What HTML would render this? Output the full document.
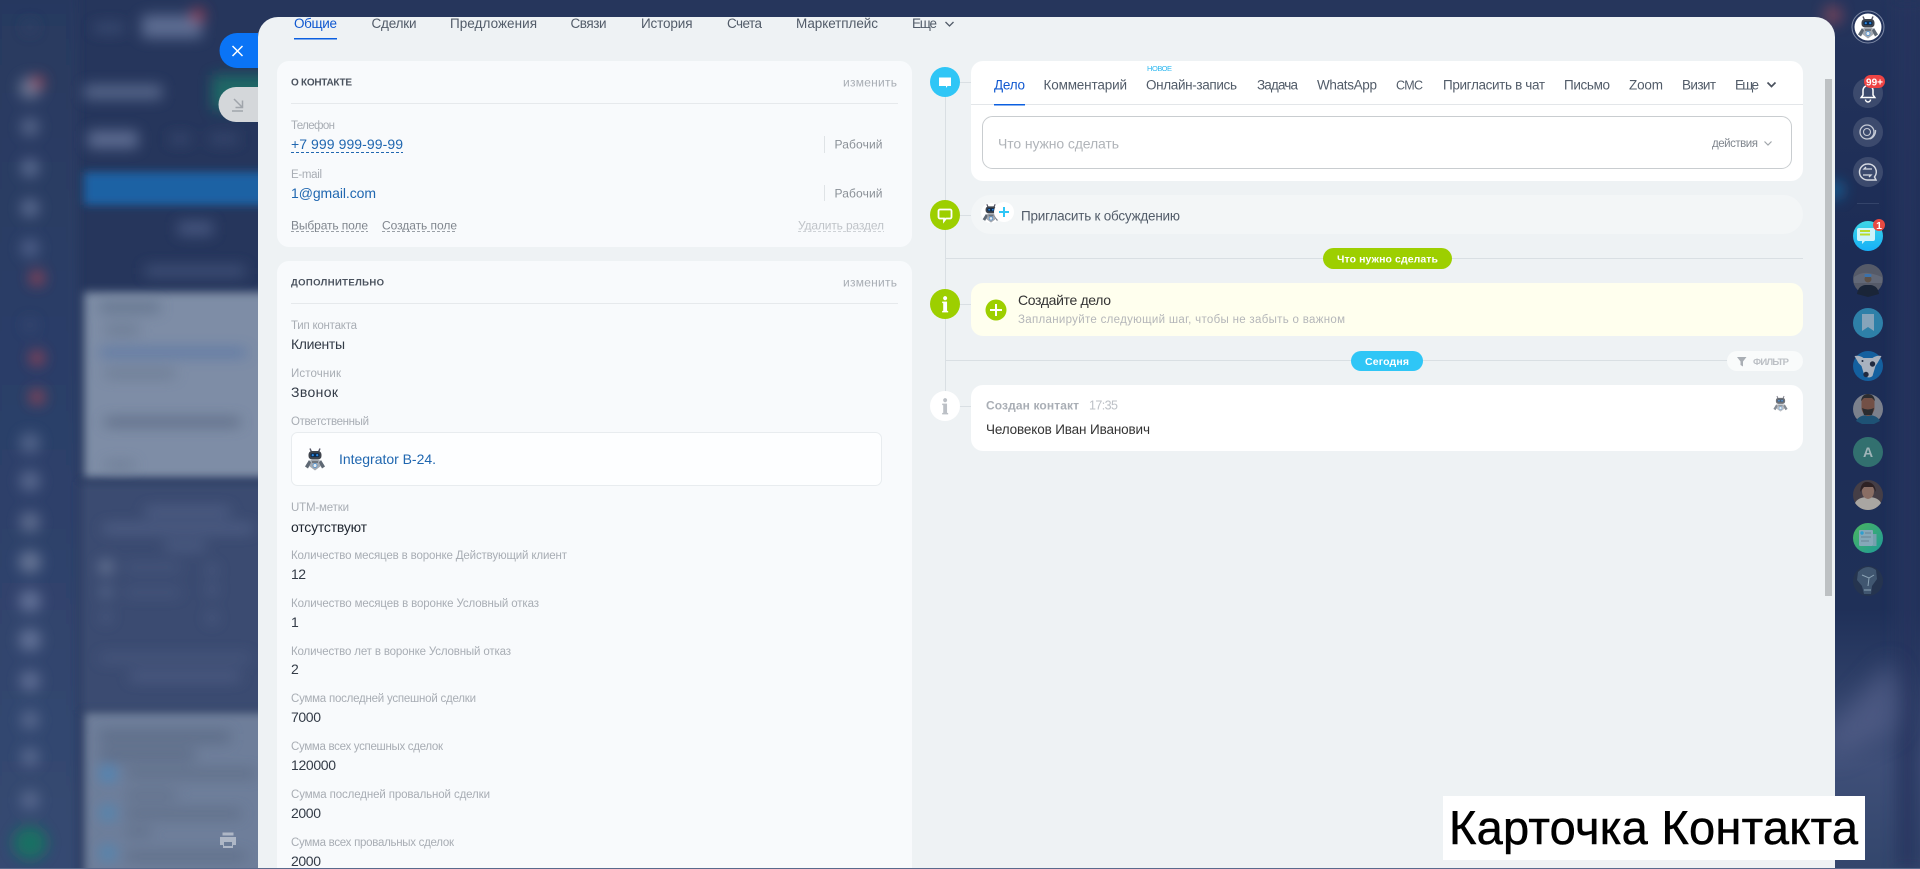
<!DOCTYPE html>
<html lang="ru">
<head>
<meta charset="utf-8">
<title>Карточка Контакта</title>
<style>
html,body{margin:0;padding:0;width:1920px;height:869px;overflow:hidden;background:#26365c}
svg{display:block}
text{font-family:"Liberation Sans","DejaVu Sans",sans-serif;white-space:pre}
.tab{font-size:13.5px;fill:#525c69}
.lbl{font-size:11.5px;fill:#a8adb4}
.val{font-size:14px;fill:#333b47}
.blu{font-size:14px;fill:#2067b0}
.head{font-size:10px;font-weight:bold;fill:#4a525e}
.chg{font-size:12px;fill:#a8adb4}
.wrk{font-size:12px;fill:#8a9097}
.pill{font-size:10.5px;font-weight:bold;fill:#fff}
</style>
</head>
<body>
<svg xmlns="http://www.w3.org/2000/svg" width="1920" height="869" viewBox="0 0 1920 869">
<defs>
<filter id="b6" x="-60%" y="-60%" width="220%" height="220%"><feGaussianBlur stdDeviation="7"/></filter>
<filter id="b3" x="-50%" y="-50%" width="200%" height="200%"><feGaussianBlur stdDeviation="4.5"/></filter>
<filter id="b12" x="-50%" y="-50%" width="200%" height="200%"><feGaussianBlur stdDeviation="12"/></filter>
<linearGradient id="leftbar" x1="0" y1="0" x2="0" y2="1"><stop offset="0" stop-color="#28395f"/><stop offset=".5" stop-color="#2c3f69"/><stop offset="1" stop-color="#364a72"/></linearGradient>
<linearGradient id="rightbar" x1="0" y1="0" x2="0" y2="1"><stop offset="0" stop-color="#24345c"/><stop offset=".3" stop-color="#1c2c55"/><stop offset=".7" stop-color="#1f3058"/><stop offset=".88" stop-color="#3f4f78"/><stop offset="1" stop-color="#33466c"/></linearGradient>
<symbol id="robot" viewBox="0 0 24 24">
<path d="M7 1.500l1.500 3.500M17 1.500l-1.500 3.500" stroke="#556" stroke-width="1.400" fill="none"/>
<rect x="5.500" y="4" width="13" height="8.500" rx="3.500" fill="#3f444c"/>
<rect x="7.500" y="6.200" width="9" height="3.800" rx="1.800" fill="#0d2a4c"/>
<circle cx="9.800" cy="8.100" r="1.100" fill="#2a86e0"/><circle cx="14.200" cy="8.100" r="1.100" fill="#2a86e0"/>
<path d="M7.500 13h9l1.500 6-6 4.500-6-4.500z" fill="#a3a9b1"/>
<path d="M6 13L2 19.500l3 2L8 15.500M18 13l4 6.500-3 2L16 15.500" fill="#5e6874"/>
<path d="M9 14h6v2H9z" fill="#70767e"/>
<circle cx="12" cy="18.500" r="2" fill="#e3e9ee" stroke="#4c8fd0" stroke-width=".8"/>
</symbol>
</defs>

<!-- blurred background -->
<rect width="1920" height="869" fill="#26365c"/>
<rect x="-10" y="-10" width="88" height="890" fill="url(#leftbar)" filter="url(#b3)"/>
<g filter="url(#b6)" opacity=".88">
<rect x="142" y="15" width="60" height="23" fill="#65749a"/>
<circle cx="198" cy="15" r="7" fill="#a84050"/>
<rect x="94" y="24" width="30" height="8" fill="#43527a"/>
<circle cx="30" cy="27" r="6" fill="#35456b"/>
<circle cx="30" cy="88" r="11" fill="#727e9a"/>
<circle cx="38" cy="82" r="6" fill="#b84852"/>
<circle cx="30" cy="127" r="9" fill="#5f6e92"/>
<circle cx="30" cy="168" r="9" fill="#65749a"/>
<circle cx="30" cy="208" r="9" fill="#65749a"/>
<circle cx="30" cy="248" r="9" fill="#566690"/>
<circle cx="37" cy="278" r="7" fill="#b44450"/>
<circle cx="30" cy="325" r="6" fill="#3e4e74"/>
<circle cx="37" cy="358" r="7" fill="#b44450"/>
<circle cx="37" cy="397" r="7" fill="#b44450"/>
<rect x="84" y="85" width="78" height="14" fill="#5e6e92"/>
<rect x="212" y="75" width="60" height="35" fill="#1a7068"/>
<rect x="88" y="131" width="50" height="17" fill="#66759a"/>
<rect x="170" y="135" width="20" height="8" fill="#3f4f76"/>
<rect x="210" y="135" width="28" height="8" fill="#3f4f76"/>
<rect x="178" y="222" width="35" height="13" fill="#4e5d86"/>
<rect x="145" y="266" width="100" height="10" fill="#47567e"/>
</g>
<rect x="84" y="172" width="190" height="33" fill="#1a62a4" filter="url(#b3)"/>
<rect x="84" y="292" width="190" height="186" fill="#7e8da6" filter="url(#b3)"/>
<rect x="80" y="482" width="190" height="228" fill="#3b4c71" filter="url(#b3)"/>
<rect x="84" y="712" width="190" height="170" fill="#6e7e9a" filter="url(#b3)"/>
<g filter="url(#b6)" opacity=".9">
<rect x="100" y="303" width="60" height="9" fill="#5f6f88"/>
<rect x="105" y="326" width="34" height="8" fill="#66768e"/>
<rect x="100" y="349" width="146" height="7" fill="#5070a4"/>
<rect x="105" y="370" width="70" height="7" fill="#66768e"/>
<rect x="105" y="418" width="135" height="8" fill="#56657f"/>
<rect x="105" y="462" width="30" height="6" fill="#66768e"/>
<rect x="145" y="508" width="85" height="7" fill="#5a6990"/>
<rect x="103" y="525" width="150" height="7" fill="#5a6990"/>
<rect x="165" y="543" width="40" height="6" fill="#5a6990"/>
<circle cx="106" cy="567" r="7" fill="#73819f"/>
<circle cx="106" cy="592" r="6" fill="#5f6f92"/>
<circle cx="106" cy="617" r="5" fill="#536388"/>
<rect x="125" y="565" width="55" height="5" fill="#4f5f84"/>
<rect x="125" y="590" width="55" height="5" fill="#4f5f84"/>
<circle cx="212" cy="570" r="5" fill="#536388"/>
<circle cx="212" cy="590" r="5" fill="#536388"/>
<circle cx="212" cy="618" r="5" fill="#536388"/>
<rect x="100" y="655" width="150" height="6" fill="#4f5f84"/>
<rect x="130" y="673" width="110" height="7" fill="#54648a"/>
<rect x="100" y="732" width="130" height="10" fill="#596882"/>
<rect x="100" y="750" width="95" height="10" fill="#596882"/>
<circle cx="108" cy="774" r="8" fill="#4488c0"/>
<circle cx="108" cy="813" r="8" fill="#4c88b8"/>
<circle cx="108" cy="853" r="8" fill="#4c88b8"/>
<rect x="126" y="770" width="130" height="7" fill="#586780"/>
<rect x="126" y="792" width="50" height="6" fill="#586780"/>
<rect x="126" y="810" width="115" height="7" fill="#586780"/>
<rect x="126" y="829" width="25" height="6" fill="#586780"/>
<rect x="126" y="853" width="120" height="7" fill="#586780"/>
<circle cx="30" cy="443" r="10" fill="#5a6a90"/>
<circle cx="30" cy="481" r="10" fill="#606f94"/>
<circle cx="30" cy="522" r="10" fill="#667594"/>
<circle cx="30" cy="562" r="11" fill="#6f7e9c"/>
<circle cx="30" cy="601" r="11" fill="#6a799e"/>
<circle cx="30" cy="640" r="11" fill="#6a799e"/>
<circle cx="30" cy="681" r="10" fill="#66759a"/>
<circle cx="30" cy="720" r="9" fill="#606f94"/>
<circle cx="30" cy="757" r="9" fill="#606f94"/>
<circle cx="30" cy="800" r="9" fill="#606f94"/>
<circle cx="30" cy="843" r="17" fill="#157562"/>
</g>

<!-- right bar -->
<rect x="1835" y="0" width="85" height="869" fill="url(#rightbar)"/>
<rect x="1895" y="0" width="25" height="869" fill="#25365f" opacity=".75" filter="url(#b6)"/>
<path d="M1828 730L1892 660L1900 700L1896 730L1830 760Z" fill="#55618a" opacity=".7" filter="url(#b12)"/>
<circle cx="1833" cy="15" r="10" fill="#a04b5a" opacity=".6" filter="url(#b6)"/>
<circle cx="1835" cy="190" r="10" fill="#1876b0" opacity=".6" filter="url(#b6)"/>

<!-- side handles -->
<path d="M258 33h-21a17.500 17.500 0 0 0 0 35h21z" fill="#0a74f6"/>
<path d="M232.500 46l10 10M242.500 46l-10 10" stroke="#fff" stroke-width="1.500" fill="none"/>
<path d="M258 87h-22a17.500 17.500 0 0 0 0 35h22z" fill="#d4d7da"/>
<path d="M234 99l8 8M242.500 100.500v7h-7M232 111h11" stroke="#a0a5ab" stroke-width="1.500" fill="none"/>
<path d="M222.500 832.500h11v3h-11zM220 837h16v8h-3v3h-10v-3h-3z" fill="#aeb7c6"/>
<rect x="224" y="842" width="8" height="4" fill="#6c7d98"/>

<!-- slider panel -->
<path d="M278 17H1815a20 20 0 0 1 20 20V868H258V37a20 20 0 0 1 20-20z" fill="#eef2f4"/>
<rect x="1825" y="79" width="7" height="517" fill="#bdc1c3"/>
<rect x="0" y="868" width="1920" height="1" fill="#5a6a8c"/>

<!-- top tabs -->
<g class="tabs">
<text class="tab" style="fill:#1058d0" x="294" y="28" textLength="43">Общие</text>
<rect x="294" y="38" width="43" height="1.500" fill="#0b5fe0"/>
<text class="tab" x="371.500" y="28" textLength="45">Сделки</text>
<text class="tab" x="450" y="28" textLength="87">Предложения</text>
<text class="tab" x="570.500" y="28" textLength="36">Связи</text>
<text class="tab" x="641" y="28" textLength="51.500">История</text>
<text class="tab" x="727" y="28" textLength="35">Счета</text>
<text class="tab" x="796" y="28" textLength="82">Маркетплейс</text>
<text class="tab" x="912" y="28" textLength="25">Еще</text>
<path d="M945.500 22l4 4 4-4" stroke="#525c69" stroke-width="1.300" fill="none"/>
</g>

<!-- left column cards -->
<rect x="277" y="61" width="635" height="186" rx="12" fill="#f8fafc"/>
<rect x="277" y="261" width="635" height="620" rx="12" fill="#f8fafc"/>
<text class="head" x="291" y="85.500" textLength="61">О КОНТАКТЕ</text>
<text class="chg" x="843" y="86.500" textLength="54">изменить</text>
<rect x="291" y="103" width="607" height="1" fill="#e6e9ec"/>

<text class="lbl" x="291" y="129" textLength="44">Телефон</text>
<text class="blu" x="291" y="149" textLength="112">+7 999 999-99-99</text>
<path d="M291 152.500H403" stroke="#2067b0" stroke-dasharray="3 2" fill="none"/>
<rect x="824" y="136" width="1" height="17" fill="#dfe3e6"/>
<text class="wrk" x="834.500" y="148.500" textLength="48">Рабочий</text>
<text class="lbl" x="291" y="178" textLength="31">E-mail</text>
<text class="blu" x="291" y="198" textLength="85">1@gmail.com</text>
<rect x="824" y="185" width="1" height="16" fill="#dfe3e6"/>
<text class="wrk" x="834.500" y="197.500" textLength="48">Рабочий</text>

<text class="chg" style="fill:#80868e" x="291" y="229.500" textLength="77">Выбрать поле</text>
<path d="M291 231.500H368" stroke="#9aa0a6" stroke-dasharray="3 2" fill="none"/>
<text class="chg" style="fill:#80868e" x="382" y="229.500" textLength="75">Создать поле</text>
<path d="M382 231.500H457" stroke="#9aa0a6" stroke-dasharray="3 2" fill="none"/>
<text class="chg" style="fill:#bfc3c8" x="798" y="229.500" textLength="86">Удалить раздел</text>
<path d="M798 231.500H884" stroke="#cfd3d7" stroke-dasharray="3 2" fill="none"/>

<text class="head" x="291" y="285.500" textLength="93" style="font-size:9.500px">ДОПОЛНИТЕЛЬНО</text>
<text class="chg" x="843" y="286.500" textLength="54">изменить</text>
<rect x="291" y="303" width="607" height="1" fill="#e6e9ec"/>

<text class="lbl" x="291" y="329" textLength="66">Тип контакта</text>
<text class="val" x="291" y="349" textLength="54">Клиенты</text>
<text class="lbl" x="291" y="377" textLength="50">Источник</text>
<text class="val" x="291" y="397" textLength="47">Звонок</text>
<text class="lbl" x="291" y="425" textLength="78">Ответственный</text>
<rect x="291.500" y="432.500" width="590" height="53" rx="6" fill="#fdfeff" stroke="#e8ecef"/>
<use href="#robot" x="303" y="447" width="24" height="24"/>
<text class="blu" style="font-size:14px" x="339" y="464" textLength="97">Integrator B-24.</text>
<text class="lbl" x="291" y="511" textLength="58">UTM-метки</text>
<text class="val" style="fill:#1f2630" x="291" y="532" textLength="76">отсутствуют</text>
<text class="lbl" x="291" y="559" textLength="276">Количество месяцев в воронке Действующий клиент</text>
<text class="val" x="291" y="579" textLength="15">12</text>
<text class="lbl" x="291" y="607" textLength="248">Количество месяцев в воронке Условный отказ</text>
<text class="val" x="291" y="627">1</text>
<text class="lbl" x="291" y="655" textLength="220">Количество лет в воронке Условный отказ</text>
<text class="val" x="291" y="674">2</text>
<text class="lbl" x="291" y="702" textLength="185">Сумма последней успешной сделки</text>
<text class="val" x="291" y="722" textLength="30">7000</text>
<text class="lbl" x="291" y="750" textLength="152">Сумма всех успешных сделок</text>
<text class="val" x="291" y="770" textLength="45">120000</text>
<text class="lbl" x="291" y="798" textLength="199">Сумма последней провальной сделки</text>
<text class="val" x="291" y="818" textLength="30">2000</text>
<text class="lbl" x="291" y="846" textLength="163">Сумма всех провальных сделок</text>
<text class="val" x="291" y="866" textLength="30">2000</text>
<rect x="258" y="868" width="1577" height="1" fill="#5a6a8c"/>

<!-- timeline -->
<rect x="945" y="82" width="1" height="325" fill="#d9dfe3"/>
<rect x="945" y="82" width="26" height="1" fill="#d9dfe3"/>
<rect x="945" y="215" width="26" height="1" fill="#d9dfe3"/>
<rect x="945" y="304" width="26" height="1" fill="#d9dfe3"/>
<rect x="945" y="406" width="26" height="1" fill="#d9dfe3"/>
<rect x="945" y="258" width="858" height="1" fill="#d9dfe3"/>
<rect x="945" y="360" width="858" height="1" fill="#d9dfe3"/>

<circle cx="945" cy="82" r="15" fill="#2fc6f6"/>
<path d="M939 77.500h12v8.500h-3.500l-1.500 2v-2h-7z" fill="#fff"/>
<circle cx="945" cy="215" r="15" fill="#9dcf00"/>
<path d="M940 209.500h10a1.500 1.500 0 0 1 1.500 1.500v6a1.500 1.500 0 0 1-1.500 1.500h-4l-2 2.500v-2.500h-4a1.500 1.500 0 0 1-1.500-1.500v-6a1.500 1.500 0 0 1 1.500-1.500z" fill="none" stroke="#fff" stroke-width="1.800"/>
<circle cx="945" cy="304" r="15" fill="#9dcf00"/>
<text x="945" y="312" text-anchor="middle" style="font-family:'Liberation Serif',serif;font-size:22px;font-weight:bold;fill:#fff;stroke:#fff;stroke-width:.7px">i</text>
<circle cx="945" cy="406" r="15" fill="#fff"/>
<text x="945" y="414" text-anchor="middle" style="font-family:'Liberation Serif',serif;font-size:22px;font-weight:bold;fill:#bcc0c6;stroke:#bcc0c6;stroke-width:.7px">i</text>

<!-- activity editor -->
<rect x="971" y="61" width="832" height="120" rx="12" fill="#fff"/>
<rect x="971" y="104" width="832" height="1" fill="#e3e6e9"/>
<text x="1147" y="71" textLength="25" style="font-size:7.500px;fill:#2fb8f0">НОВОЕ</text>
<text class="tab" style="fill:#1058d0" x="994" y="89.500" textLength="31">Дело</text>
<rect x="994" y="104" width="31" height="1.500" fill="#0b5fe0"/>
<text class="tab" x="1043.500" y="89.500" textLength="83.500">Комментарий</text>
<text class="tab" x="1146" y="89.500" textLength="91">Онлайн-запись</text>
<text class="tab" x="1257" y="89.500" textLength="41">Задача</text>
<text class="tab" x="1317" y="89.500" textLength="60">WhatsApp</text>
<text class="tab" style="font-size:12.500px" x="1396" y="89.500" textLength="27">СМС</text>
<text class="tab" x="1443" y="89.500" textLength="102">Пригласить в чат</text>
<text class="tab" x="1564" y="89.500" textLength="46">Письмо</text>
<text class="tab" x="1629" y="89.500" textLength="34">Zoom</text>
<text class="tab" x="1682" y="89.500" textLength="34">Визит</text>
<text class="tab" x="1735" y="89.500" textLength="24">Еще</text>
<path d="M1767.500 82.500l4 4 4-4" stroke="#4a525e" stroke-width="1.700" fill="none"/>
<rect x="982.500" y="116.500" width="809" height="52" rx="10" fill="#fff" stroke="#c9cdd0"/>
<text x="998" y="148.500" textLength="121" style="font-size:14px;fill:#b0b4b9">Что нужно сделать</text>
<text x="1712" y="147" textLength="46" style="font-size:11.500px;fill:#7f858d">действия</text>
<path d="M1764.500 141.500l3.500 3.500 3.500-3.500" stroke="#a0a5aa" stroke-width="1.200" fill="none"/>

<!-- invite -->
<rect x="971" y="195" width="832" height="39" rx="19.500" fill="#f3f6f7"/>
<circle cx="991" cy="213" r="10" fill="#fff"/>
<use href="#robot" x="981" y="203" width="20" height="20"/>
<circle cx="1004" cy="212" r="10" fill="#fff"/>
<path d="M1004 207v10M999 212h10" stroke="#2fc6f6" stroke-width="2" fill="none"/>
<text x="1021" y="220.500" textLength="159" style="font-size:13.500px;fill:#525c69">Пригласить к обсуждению</text>

<!-- separator 1 -->
<rect x="1323" y="248" width="129" height="21" rx="10.500" fill="#9dcf00"/>
<text class="pill" x="1337" y="262.500" textLength="101">Что нужно сделать</text>

<!-- yellow -->
<rect x="971" y="283" width="832" height="53" rx="12" fill="#ffffee"/>
<circle cx="996" cy="310" r="10.500" fill="#9dcf00"/>
<path d="M996 304v12M990 310h12" stroke="#fff" stroke-width="2" fill="none"/>
<text x="1018" y="305" textLength="93" style="font-size:14px;fill:#333">Создайте дело</text>
<text x="1018" y="323" textLength="327" style="font-size:11.500px;fill:#b4b6b9">Запланируйте следующий шаг, чтобы не забыть о важном</text>

<!-- separator 2 -->
<rect x="1351" y="351" width="72" height="20" rx="10" fill="#2fc6f6"/>
<text class="pill" x="1365" y="365" textLength="44">Сегодня</text>
<rect x="1727" y="351" width="76" height="20" rx="10" fill="#f9fbfb"/>
<path d="M1737 357h9.500l-3.500 4.500v5l-2.500-1.500v-3.500z" fill="#a9aeb4"/>
<text x="1753" y="365" textLength="36" style="font-size:9.500px;font-weight:bold;fill:#bcc0c5">ФИЛЬТР</text>

<!-- history item -->
<rect x="971" y="385" width="832" height="66" rx="12" fill="#fff"/>
<text x="986" y="409.500" textLength="93" style="font-size:12px;font-weight:bold;fill:#a9aeb5">Создан контакт</text>
<text x="1089" y="409.500" textLength="29" style="font-size:12.500px;fill:#bcc0c6">17:35</text>
<text x="986" y="434" textLength="164" style="font-size:13.500px;fill:#333">Человеков Иван Иванович</text>
<use href="#robot" x="1772" y="395" width="17" height="17" opacity=".75"/>

<!-- right column icons -->
<circle cx="1868" cy="27" r="16" fill="none" stroke="#7e8aa6"/>
<circle cx="1868" cy="27" r="13.500" fill="#fff"/>
<use href="#robot" x="1856" y="14" width="24" height="26"/>

<circle cx="1868" cy="93" r="15" fill="#3c4a6d"/>
<path d="M1868 85.500a5 5 0 0 1 5 5v4.500l1.800 2.500h-13.600l1.800-2.500v-4.500a5 5 0 0 1 5-5zM1865.500 99.500a2.500 2.500 0 0 0 5 0" fill="none" stroke="#fff" stroke-width="1.500"/>
<rect x="1864" y="75" width="21" height="13" rx="6.500" fill="#ee4444"/>
<text x="1874.500" y="85.500" text-anchor="middle" style="font-size:10px;font-weight:bold;fill:#fff">99+</text>

<circle cx="1868" cy="132" r="15" fill="#3c4a6d"/>
<circle cx="1867" cy="132" r="7" fill="none" stroke="#c6cbd6" stroke-width="1.300"/>
<circle cx="1867" cy="132" r="3.500" fill="none" stroke="#c6cbd6" stroke-width="1.100"/>
<path d="M1875.500 130a8.500 8.500 0 0 1-6 9" fill="none" stroke="#c6cbd6" stroke-width="1.300"/>

<circle cx="1868" cy="172" r="15" fill="#3c4a6d"/>
<path d="M1867.500 164a8 8 0 1 0 0 16h8.500l-1.500-3a8 8 0 0 0-7-13z" fill="none" stroke="#d6dae2" stroke-width="1.500"/>
<path d="M1872 169h-8l2-2M1863 175h8l-2 2" fill="none" stroke="#d6dae2" stroke-width="1.300"/>

<rect x="1857" y="203" width="22" height="1" fill="#34446a"/>

<defs><linearGradient id="chatg" x1="0" y1="0" x2="0" y2="1"><stop offset="0" stop-color="#3dd6e6"/><stop offset="1" stop-color="#16b0f8"/></linearGradient>
<linearGradient id="newsg" x1="0" y1="0" x2="1" y2="1"><stop offset="0" stop-color="#4ab55f"/><stop offset="1" stop-color="#1f9a98"/></linearGradient></defs>
<circle cx="1868" cy="236" r="15" fill="url(#chatg)"/>
<path d="M1859 228h14a2 2 0 0 1 2 2v9a2 2 0 0 1-2 2h-8l-3 3v-3h-3a2 2 0 0 1-2-2v-9a2 2 0 0 1 2-2z" fill="#cdf3fa"/>
<path d="M1860 231h10M1860 234.500h10" stroke="#b8dc2a" stroke-width="2"/>
<circle cx="1879" cy="225" r="6" fill="#e84a42"/>
<text x="1879" y="229" text-anchor="middle" style="font-size:10.500px;font-weight:bold;fill:#fff">1</text>

<circle cx="1868" cy="279" r="15" fill="#555a68"/>
<path d="M1854 277q7-5 14-4t14 4v6h-28z" fill="#626877"/>
<path d="M1857 294q1-8 8-9h6q7 1 8 9l-11 3z" fill="#1a2538"/>
<circle cx="1868" cy="279" r="3.500" fill="#5d5148"/>
<rect x="1864.500" y="274" width="7" height="3" rx="1" fill="#3b72ac"/>

<circle cx="1868" cy="323" r="15" fill="#2e80a8"/>
<path d="M1862 314h12v17l-6-4-6 4z" fill="#86a4ba"/>

<circle cx="1868" cy="366" r="15" fill="#14609f"/>
<path d="M1854.500 356q5-1 9 2h9q4-3 9-2l-4 7-2 3-3 10q-3 3-8 0l-3-10-3-3z" fill="#a9b2bf"/>
<circle cx="1872.500" cy="364" r="2.700" fill="#1f2a40"/>
<circle cx="1866" cy="374.500" r="2.700" fill="#1f2a40"/>
<circle cx="1862.500" cy="361" r="1" fill="#1f2a40"/>

<circle cx="1868" cy="409" r="15" fill="#7b808c"/>
<path d="M1856 421q3-6 12-6t12 6l-6 3h-12z" fill="#1e5275"/>
<path d="M1861.500 402q0-7 6.500-7t6.500 7v7q-2 7-6.500 7t-6.500-7z" fill="#735046"/>
<path d="M1861 401q1-7 7-7t7 7l-3-3h-8zM1862 408q6 3 12 0l-2 7h-8z" fill="#2b2c30"/>

<circle cx="1868" cy="452" r="15" fill="#32706f"/>
<text x="1868" y="457" text-anchor="middle" style="font-size:14px;font-weight:bold;fill:#a0b4b8">A</text>

<circle cx="1868" cy="495" r="15" fill="#453e46"/>
<path d="M1855 503q3-6 13-6t13 6q-5 7-13 7t-13-7z" fill="#a9a6a2"/>
<path d="M1862 491q0-6 6-6t6 6q0 7-6 8-6-1-6-8z" fill="#8a6e64"/>
<path d="M1860 492q1-11 8-10t8 10l-3-5h-9z" fill="#2e2224"/>

<circle cx="1868" cy="538" r="15" fill="url(#newsg)"/>
<rect x="1859" y="530" width="14" height="16" rx="1" fill="#85a8b8"/>
<rect x="1873" y="534" width="3.500" height="12" fill="#75a0ae"/>
<circle cx="1862" cy="533" r="1.700" fill="#2d9fd0"/>
<path d="M1865 533h6M1861 537h10M1861 541h8" stroke="#6d8c9c" stroke-width="1.200"/>

<circle cx="1868" cy="581" r="15" fill="#25344f"/>
<path d="M1858 572q9-9 18-2l1 9-5 7-1 8h-7l-2-8-5-6z" fill="#405670"/>
<path d="M1862 575l7 3 5-3M1869 578l-1 8M1864 590h7" stroke="#8ca4b6" fill="none"/>

<!-- caption -->
<rect x="1443" y="796" width="422" height="64" fill="#fff"/>
<text x="1449" y="844" textLength="409" style="font-size:47px;fill:#000;stroke:#000;stroke-width:.5px">Карточка Контакта</text>
</svg>
</body>
</html>
